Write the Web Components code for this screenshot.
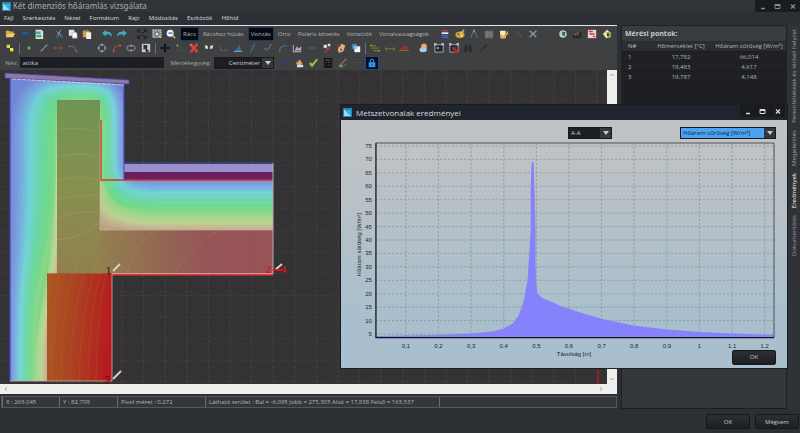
<!DOCTYPE html>
<html lang="hu">
<head>
<meta charset="utf-8" />
<title>Két dimenziós hőáramlás vizsgálata</title>
<style>
  html, body { height: 100%; }
  body {
    margin: 0;
    overflow: hidden;
    background: #2c2f34;
    color: #b4b6ba;
    font: 6px/8px "Open Sans", "Noto Sans", sans-serif;
  }
</style>
</head>
<body>
<heat-app></heat-app>

<script>
const define = (name, html, setup) => {
  const template = document.createElement("template");
  template.innerHTML = html;
  customElements.define(
    name,
    class extends HTMLElement {
      constructor() {
        super();
        this.attachShadow({ mode: "open" });
        this.shadowRoot.appendChild(template.content.cloneNode(true));
      }
      connectedCallback() {
        if (setup) setup(this, this.shadowRoot);
      }
    }
  );
};

// ---- icons, 12x12 canvas ----
const ICONS = {
  open: `<path d="M1 2h4l1 1h4v2H3l-2 5z" fill="#e8a33c"/><path d="M3 5h9l-2 5H1z" fill="#f8c869"/>`,
  save: `<path d="M1 3h10v6H1z" fill="#24466f"/><path d="M3 4h6v2H3z" fill="#315d90"/>`,
  export: `<path d="M2 1h7l2 2v9H2z" fill="#d5e6d8"/><path d="M2 3h6v3H2z" fill="#4c9fc8"/><path d="M3 7h6v3H3z" fill="#43b351"/>`,
  cut: `<path d="M8 1L5 8M3 3l6 5" stroke="#9aa9bb" fill="none"/><circle cx="4" cy="9" r="1.5" fill="none" stroke="#3f78b8"/><circle cx="9" cy="9" r="1.2" fill="none" stroke="#3f78b8"/>`,
  copy: `<path d="M1 1h6l1 2v5H1z" fill="#e4e6e8"/><path d="M5 4h5l1 2v5H5z" fill="#f8f8f8" stroke="#8a8f98" stroke-width=".5"/>`,
  paste: `<path d="M1 2h8v8H1z" fill="#d99c45"/><path d="M3 1h4v2H3z" fill="#777"/><path d="M5 4h6v8H5z" fill="#f0eee8"/>`,
  undo: `<path d="M0 5l5-4v2.500c4-1 7 1 7 6-2-3-4-3.500-7-3v2.500z" fill="#45a9c6"/>`,
  redo: `<path d="M12 5L7 1v2.500c-4-1-7 1-7 6 2-3 4-3.500 7-3v2.500z" fill="#45a9c6"/>`,
  extents: `<path d="M1 4V1h3M8 1h3v3M11 8v3H8M4 11H1V8M2 2l3 3M10 2L7 5M10 10L7 7M2 10l3-3" fill="none" stroke="#17181a" stroke-width="1.200"/>`,
  zoomwin: `<path d="M1 1h10v9H1z" fill="#8f979f"/><path d="M1 1h10v9H1z" fill="none" stroke="#d8d8d8" stroke-dasharray="2 1"/><circle cx="6" cy="6" r="2.500" fill="#d8e8f5" stroke="#394250"/><path d="M8 8l3 3" stroke="#ddd"/>`,
  zoom: `<circle cx="5" cy="5" r="4.200" fill="#f1f5fa"/><path d="M3 4h5v2H3z" fill="#4b8bd0"/><path d="M8 8l3 3" stroke="#d5a04b" stroke-width="2"/>`,
  layers: `<path d="M2 1h8v2H2z" fill="#a83c55"/><path d="M2 4h8v2H2z" fill="#e9ecf5"/><path d="M2 7h8v1H2z" fill="#4c79d8"/><path d="M2 9h8v2H2z" fill="#3862d0"/>`,
  palette: `<ellipse cx="6" cy="7" rx="5.500" ry="4" fill="#c9a13c"/><circle cx="4" cy="6" r="1" fill="#5e471d"/><circle cx="8" cy="8" r="1" fill="#fff"/><path d="M6 6l5-5" stroke="#e8d078" stroke-width="1.500"/>`,
  compass: `<path d="M6 1L2 11M6 1l4 10" stroke="#5d6e82" stroke-width="1.300"/><path d="M5 1h2v3H5z" fill="#8594a6"/>`,
  table: `<path d="M1 2h10v9H1z" fill="#676569"/><path d="M1 5h10M1 8h10M4 2v9M8 2v9" stroke="#8d7f84" stroke-width=".8"/>`,
  check: `<path d="M1 2h7v9H2z" fill="#f4e5ca"/><path d="M2 6l3 3 6-7v4L5 12 2 9z" fill="#f39b32"/>`,
  line: `<path d="M3 3l6 6" stroke="#5d626a" stroke-width="1.200"/>`,
  cross: `<path d="M2 2l8 8M10 2l-8 8" stroke="#8f979f" stroke-width="1.600"/>`,
  redline: `<path d="M2 6h8" stroke="#6d3337"/>`,
  globe: `<circle cx="6" cy="6" r="4.500" fill="#b9cfc4"/><path d="M5 3l4 1-1 5-3-2z" fill="#2e6b51"/>`,
  bars: `<path d="M1 7h3v4H1zM5 8h3v3H5zM9 2h2v9H9z" fill="#202124"/><path d="M2 7l4-1 4-4" stroke="#a66443" fill="none"/>`,
  report: `<path d="M1 1h10v10H1z" fill="#ead5d5"/><path d="M2 2h5v2H2zM3 5h6v2H3zM7 8h3v2H7z" fill="#d23b43"/>`,
  ball: `<path d="M1 6l5-5 5 4-1 5-5 1z" fill="#e9e8b5"/><path d="M5 4h4l2 3-4 4z" fill="#7d9b2e"/><path d="M6 6h2v2H6z" fill="#26301d"/>`,
  snap: `<path d="M2 2h4v4H2z" fill="#e1d540"/><path d="M6 6h4v4H6z" fill="#f5e63c"/>`,
  dot: `<circle cx="6" cy="6" r="2" fill="#45b54d"/>`,
  seg: `<path d="M2 10l8-8" stroke="#9c9296" stroke-width="1.400"/>`,
  hseg: `<path d="M1 6h10" stroke="#b23b3e"/><path d="M1 5h2v2H1zM9 5h2v2H9z" fill="#c94c48"/>`,
  poly: `<path d="M1 4h6l3 6" stroke="#836b91" fill="none"/><path d="M1 3h2v2H1zM9 9h2v2H9z" fill="#ad5661"/>`,
  rect: `<path d="M2 2h8v8H2z" fill="none" stroke="#3f4678" stroke-width="1.500" stroke-dasharray="2 1"/>`,
  circle: `<circle cx="6" cy="6" r="4" fill="none" stroke="#6c6f92" stroke-width="1.500"/><path d="M5 1h2v2H5zM5 9h2v2H5zM1 5h2v2H1zM9 5h2v2H9z" fill="#b6b7ca"/>`,
  arc: `<path d="M2 10c0-6 3-7 8-7" fill="none" stroke="#a64a43" stroke-width="1.500"/><path d="M1 9h2v2H1zM9 2h2v2H9z" fill="#ca6150"/>`,
  ellipse: `<ellipse cx="6" cy="6" rx="5" ry="3" fill="none" stroke="#7d76a0" stroke-width="1.500"/><path d="M5 2h2v2H5zM5 8h2v2H5z" fill="#a9a4c8"/>`,
  image: `<path d="M1 1h10v10H1z" fill="#c9cac7"/><path d="M3 2l5 1-1 4 3 3-4 1-1-4-2 1z" fill="#2a2d2e"/>`,
  move: `<path d="M6 0l2 3H7v2h2V4l3 2-3 2V7H7v2h1l-2 3-2-3h1V7H3v1L0 6l3-2v1h2V3H4z" fill="#111214"/>`,
  scatter: `<path d="M2 2h2v2H2z" fill="#b8a87f"/><path d="M6 5l4 5" stroke="#565e68"/><path d="M3 8h1v1H3z" fill="#999"/>`,
  delete: `<path d="M2 2l8 9M10 1l-8 10" stroke="#d94136" stroke-width="3"/><path d="M1 1h3v2H1z" fill="#d97a62"/>`,
  mirror: `<path d="M1 3h3l1 4H2zM11 3H8L7 7h3z" fill="#e7e7e3"/>`,
  offset: `<path d="M2 3v6h8" fill="none" stroke="#6b6d74" stroke-dasharray="2 1"/><path d="M6 5l3 3" stroke="#9c5757"/>`,
  rotate: `<path d="M2 10L8 2l2 8z" fill="#2b6f9d"/><path d="M1 10h10" stroke="#92b7cc"/>`,
  trim: `<path d="M8 1L5 7l-2 4" fill="none" stroke="#3e6b95" stroke-width="1.500"/>`,
  extend: `<path d="M10 1L6 8M2 6l3 3" fill="none" stroke="#4d7ba6" stroke-width="1.300"/>`,
  fillet: `<path d="M2 11c0-6 2-8 9-8" fill="none" stroke="#3f7397" stroke-width="1.500"/>`,
  chart: `<path d="M1 2h1v8h9v1H1z" fill="#c5c4cf"/><path d="M3 9l3-5 2 3 3-3v5z" fill="#b7a8c9"/>`,
  join: `<path d="M0 6h4M8 6h4M4 4l4 4M8 4L4 8" stroke="#49657e"/>`,
  explode: `<path d="M2 2h4v4H2zM7 1h3v3H7z" fill="#dedcdc"/><path d="M5 5h4v3H5zM3 9h3v2H3z" fill="#b93b4b"/>`,
  hand: `<path d="M3 5l4-4 4 2-2 7-5 2-2-3z" fill="#e1ac83"/><path d="M1 2h4v3H1z" fill="#6c4141"/><path d="M5 6l3 2-3 2z" fill="#b74332"/>`,
  group: `<path d="M1 1h6v6H1z" fill="#3d84ad"/><path d="M4 4h7v7H4z" fill="#f0f4f6"/><path d="M3 3h4v4H3z" fill="#89c0da"/>`,
  dim: `<path d="M1 3h6M2 6h8M4 9h8" stroke="#7f7c25" stroke-width="1.500"/><path d="M1 1v4M11 8v3" stroke="#a5a02c"/>`,
  dimline: `<path d="M0 7h12M1 5v4M11 5v4" stroke="#827e27" stroke-width="1.200"/>`,
  hatch: `<path d="M1 8l5-5 5 2v3z" fill="#a52a2d"/><path d="M0 9h12" stroke="#807b26"/>`,
  weather: `<circle cx="6" cy="4" r="3.500" fill="#eda45c"/><ellipse cx="5" cy="8" rx="4.500" ry="3" fill="#a9c9e6"/>`,
  frame: `<path d="M1 2h10v9H1z" fill="#24272b" stroke="#b2bac3"/><path d="M0 0h3v3H0zM9 0h3v3H9z" fill="#b2bac3"/><path d="M3 5h3v2H3z" fill="#8ea5bb"/>`,
  framered: `<path d="M1 2h10v9H1z" fill="#30272b" stroke="#a5adb8"/><path d="M0 0h3v3H0zM9 0h3v3H9z" fill="#b2bac3"/><path d="M4 5h4v3h3v4H6V8H4z" fill="#bf2632"/>`,
  binoc: `<path d="M2 2h3v9H1zM7 2h3l1 9H7zM4 5h4v2H4z" fill="#2b2c2e"/>`,
  pencil: `<path d="M2 11l1-3 7-7 1 2-7 7z" fill="#2d2e30"/>`,
  blue: `<path d="M4 5h4v2H4zM5 4h2v4H5z" fill="#29349a"/>`,
  edit: `<path d="M2 2l6 1 2 4-6 4z" fill="#e4a74c"/><path d="M5 8h6v3H3z" fill="#dfe0e9"/><path d="M1 2h4v3H1z" fill="#393f76"/>`,
  ok: `<path d="M1 7l2-2 2 2 5-6 2 1-7 9z" fill="#8cc63f"/>`,
  calc: `<path d="M1 0h10v12H1z" fill="#151618"/><path d="M3 2h6v1H3zM3 5h1v1H3zM6 5h1v1H6zM8 5h1v1H8zM3 8h1v1H3zM6 8h1v1H6zM8 8h1v1H8z" fill="#77797c"/>`,
  measure: `<path d="M1 10L10 1" stroke="#a16f69" stroke-width="1.500"/><path d="M3 8h3v3H1z" fill="#43a75b"/><path d="M8 7h2v2H8z" fill="#b74c4c"/>`,
  dots: `<path d="M1 5h3v1H1zM8 5h3v1H8z" fill="#47607a"/>`,
  lock: `<path d="M4 5V3.500a2 2 0 0 1 4 0V5" fill="none" stroke="#3491f2" stroke-width="1.300"/><path d="M2 5h8v6H2z" fill="#3491f2"/><path d="M6 7v2" stroke="#0b2e55"/>`,
};

// <tool-group icons="a b c"> spreads its buttons over the basis that its user gives
define("tool-group", `
<style>
  :host { display: flex; justify-content: space-between; align-items: center; }
  button { width: 14px; height: 14px; padding: 2px; border: 0; background: none; }
  button.on { background: #04101f; outline: 1px solid #1e4a7c; outline-offset: -1px; }
  svg { display: block; width: 10px; height: 10px; }
</style>`, (host, root) => {
  for (const name of host.getAttribute("icons").split(" ")) {
    const button = document.createElement("button");
    button.type = "button";
    button.setAttribute("aria-label", name);
    if (name === "lock") button.className = "on";
    button.innerHTML = `<svg viewBox="0 0 12 12">${ICONS[name]}</svg>`;
    root.append(button);
  }
});

define("app-logo", `
<style>
  :host { display: block; width: 9px; height: 9px; }
  svg { display: block; }
</style>
<svg viewBox="0 0 9 9"><path d="M0 0h9v9H0z" fill="#2287b8"/><path d="M1 1l7 7H1z" fill="#8fdcf5"/><path d="M2 2h6v5z" fill="#39aedd"/></svg>`);

define("window-buttons", `
<style>
  :host { display: flex; background: #191b1f; border-radius: 0 0 2px 2px; }
  button { width: 15px; height: 12px; padding: 0; border: 0; background: none; color: inherit; }
  svg { display: block; width: 7px; height: 7px; margin: auto; fill: none; stroke: currentColor; }
</style>
<button aria-label="Kis méret"><svg viewBox="0 0 7 7"><path d="M2 5.500h4" stroke-width="1.500"/></svg></button>
<button aria-label="Teljes méret"><svg viewBox="0 0 7 7"><path d="M1 1.500h5v4H1zM1 2.500h5"/></svg></button>
<button aria-label="Bezárás"><svg viewBox="0 0 7 7"><path d="M2 1.500l4 4M6 1.500l-4 4" stroke-width="1.300"/></svg></button>`);

define("menu-bar", `
<style>
  :host { display: block; font-family: "Noto Sans", sans-serif; }
  nav { display: flex; gap: 9px; padding: 2px 4px 3px; }
  a { color: #d0d2d5; text-decoration: none; }
</style>
<nav>
  <a href="#">Fájl</a><a href="#">Szerkesztés</a><a href="#">Nézet</a><a href="#">Formátum</a>
  <a href="#">Rajz</a><a href="#">Módosítás</a><a href="#">Eszközök</a><a href="#">Hőhíd</a>
</nav>`);

define("push-button", `
<style>
  :host { display: block; }
  button {
    width: 44px; height: 15px; padding: 0;
    font: inherit; color: #c6c8cb;
    background: linear-gradient(#2d3033, #1c1e20);
    border: 1px solid #15171a; border-radius: 2px;
  }
</style>
<button type="button"><slot></slot></button>`);

define("drop-down", `
<style>
  :host { display: flex; height: 12px; box-sizing: border-box; border: 1px solid #17191d; background: #1c1e23; color: #d0d2d5; }
  select {
    flex: 1; min-width: 0; padding: 0 2px; border: 0; border-radius: 0;
    appearance: none; background: none; color: inherit; font: inherit;
    text-align-last: var(--align, left);
  }
  span { width: 11px; background: #34373e; display: grid; place-items: center; }
  svg { width: 6px; height: 4px; }
  :host([active]) { color: #0c2440; }
  :host([active]) select { background: #4da3f2; }
</style>
<select></select>
<span><svg viewBox="0 0 6 4"><path d="M0 0h6L3 4z" fill="#c9cbce"/></svg></span>`, (host, root) => {
  const select = root.querySelector("select");
  select.setAttribute("aria-label", host.getAttribute("label"));
  select.add(new Option(host.getAttribute("value")));
});

define("tool-bars", `
<style>
  :host { display: flex; flex-direction: column; background: #3e4042; border-top: 1px solid #e4e5e6; }
  .row { display: flex; align-items: center; height: 14px; gap: 2px; padding-left: 3px; }
  .row.first { gap: 6px; height: 15px; }
  .sep { width: 1px; height: 11px; background: #6a6c6f; }
  .toggles { display: flex; flex: 1; justify-content: space-between; }
  .toggles button { height: 14px; padding: 0 2px; border: 1px solid transparent; background: none; color: #b4b6ba; font: inherit; white-space: nowrap; }
  .toggles button[aria-pressed="true"] { background: #060a12; border-color: #1d3a5c; }
  label { color: #a4a6a9; }
  .row.fields { gap: 3px; height: 15px; padding-left: 5px; }
  .unit { margin-left: 3px; }
  input { width: 144px; height: 11px; box-sizing: border-box; border: 0; padding: 0 2px; background: #1c1e23; color: #c6c8cb; font: inherit; }
  drop-down { width: 60px; --align: right; }
</style>
<div class="row first">
  <tool-group icons="open save export" style="flex:0 0 43px"></tool-group>
  <tool-group icons="cut copy paste" style="flex:0 0 42px"></tool-group>
  <tool-group icons="undo redo" style="flex:0 0 29px"></tool-group>
  <tool-group icons="extents zoomwin zoom" style="flex:0 0 43px;margin-right:-4px"></tool-group>
  <div class="toggles">
    <button aria-pressed="true">Rács</button><button>Rácshoz húzás</button><button aria-pressed="true">Vonzás</button>
    <button>Orto</button><button>Poláris követés</button><button>Vonalzók</button><button>Vonalvastagságok</button>
  </div>
  <tool-group icons="layers palette compass table check line cross redline globe bars report ball" style="flex:0 0 176px;margin-right:3px"></tool-group>
</div>
<div class="row">
  <tool-group icons="snap"></tool-group><i class="sep"></i>
  <tool-group icons="dot seg hseg poly rect circle arc ellipse image" style="flex:0 0 131px"></tool-group><i class="sep"></i>
  <tool-group icons="move scatter delete mirror offset rotate trim extend fillet chart join explode hand group" style="flex:0 0 205px"></tool-group><i class="sep"></i>
  <tool-group icons="dim dimline hatch" style="flex:0 0 43px;margin-right:4px"></tool-group>
  <tool-group icons="weather frame framered binoc pencil" style="flex:0 0 73px"></tool-group>
</div>
<div class="row fields">
  <label for="name">Név:</label><input id="name" value="attika" />
  <label class="unit">Mértékegység:</label><drop-down label="Mértékegység" value="Centiméter"></drop-down>
  <tool-group icons="blue edit ok calc measure dots lock" style="flex:1;max-width:102px"></tool-group>
</div>`);

// ---- section drawing with isotherms ----
const HEAT = [
  [0, 112, 135, 215], [0.1, 110, 160, 220], [0.25, 105, 208, 215], [0.4, 98, 212, 160],
  [0.55, 105, 214, 130], [0.7, 150, 212, 130], [0.85, 188, 205, 140], [1, 190, 160, 135],
];

function heatColor(t) {
  const i = Math.max(1, HEAT.findIndex((s) => s[0] >= t));
  const [a, b] = [HEAT[i - 1], HEAT[i]];
  const k = (t - a[0]) / (b[0] - a[0]);
  return `rgb(${[1, 2, 3].map((n) => Math.round(a[n] + (b[n] - a[n]) * k))})`;
}

function isotherm(t) {
  const xb = 10 + 37 * t;
  const yr = 180 + 50 * t;
  const end = `${yr} L275 ${yr} L275 400 Z`;
  const start = `M${xb} 400 L${xb} 370`;
  if (t <= 0.65) {
    const u = t / 0.65;
    const xl = 12 + 45 * u;
    const ty = 77 + 23 * u;
    const xr = 124 - 23 * u;
    return `${start} C${xb} 250 ${xl} 270 ${xl} 150 C${xl} ${ty + 6} ${xl + 8} ${ty} 80 ${ty}
      C${xr - 6} ${ty} ${xr} ${ty + 6} ${xr} 125 L${xr} 158 C${xr} ${yr - 6} ${xr + 14} ${yr} 155 ${end}`;
  }
  const v = (t - 0.65) / 0.35;
  return `${start} C${xb} 300 57 300 57 ${100 + 170 * v} L100 ${165 + 58 * v} C106 ${yr - 5} 125 ${yr} 165 ${end}`;
}

define("section-canvas", `
<style>
  :host { display: block; overflow: hidden; background: #333335; }
  svg { display: block; width: 100%; height: 100%; }
  text { font: 10px "Liberation Serif", serif; }
  .hot { font-weight: bold; fill: #d8141a; }
</style>
<svg viewBox="0 70 607 315" preserveAspectRatio="xMinYMin slice">
  <defs>
    <clipPath id="body"><path d="M10 77L124 84V180H273V274H112V381H10Z"/></clipPath>
    <linearGradient id="column" x1="0" y1="0" x2="0" y2="1">
      <stop offset="0" stop-color="#6f9452"/><stop offset=".5" stop-color="#87904f"/><stop offset="1" stop-color="#92804f"/>
    </linearGradient>
    <linearGradient id="slab" x1="0" y1="0" x2="1" y2="0">
      <stop offset="0" stop-color="#92804f"/><stop offset=".3" stop-color="#936b52"/><stop offset=".6" stop-color="#955557"/><stop offset="1" stop-color="#975356"/>
    </linearGradient>
    <linearGradient id="wall" x1="0" y1="0" x2="1" y2=".1">
      <stop offset="0" stop-color="#ab5a22"/><stop offset=".5" stop-color="#ab4022"/><stop offset="1" stop-color="#b51c1f"/>
    </linearGradient>
  </defs>
  <g id="grid" fill="none" stroke="#6b4247" stroke-width=".6" stroke-dasharray="3 2"></g>
  <path d="M598 370v15" stroke="#a01c20" stroke-width="2"/>
  <g clip-path="url(#body)">
    <path d="M0 70h280v320H0z" fill="#7087d7"/>
    <g id="heat" stroke="#fff" stroke-opacity=".18" stroke-width=".6"></g>
    <path d="M57 100h43v174H57z" fill="url(#column)"/>
    <path d="M100 230h173v44H100z" fill="url(#slab)"/>
    <g fill="none" stroke="#b5a15c" stroke-opacity=".6" stroke-width=".7">
      <path d="M57 130q22-5 43 3M57 157q22-6 43 0M57 180q22-5 43 0M57 199q22-4 43-4M57 218q20-8 43-6M57 240q25-2 43-18"/>
      <path d="M74 274q4-25 33-44M93 274q3-25 36-44M127 274q6-30 30-44M174 274q20-32 46-44" stroke-opacity=".35"/>
    </g>
    <path d="M47 274h65v107H47z" fill="url(#wall)"/>
    <path d="M52 381q0-70 8-107M61 381q0-65 11-107M70 381q0-60 14-107M79 381q1-60 14-107M88 381q1-65 12-107M96 381q1-70 10-107" fill="none" stroke="#c8702c" stroke-opacity=".35" stroke-width=".7"/>
    <path d="M100 122v108h173" fill="none" stroke="#d3b89c" stroke-opacity=".6"/>
  </g>
  <path d="M124 164h149v8H124z" fill="#9a90cb"/>
  <path d="M124 172h149v7H124z" fill="#6a2060"/>
  <path d="M124 180V163H273" fill="none" stroke="#4b45c0"/>
  <path d="M124 84v79M10 78v303" stroke="#4843bd" stroke-width="1.200"/>
  <path d="M5 73l124 7v4L5 78z" fill="#8d78a8" stroke="#4a42b4" stroke-width=".7"/>
  <path d="M12 79l112 6" stroke="#ded3d8" stroke-width=".8" stroke-dasharray="4 1"/>
  <path d="M101 120v60h172" fill="none" stroke="#d23432" stroke-width="1.300"/>
  <path d="M273 163v111" stroke="#b6a9ae"/>
  <path d="M47 273.500h65" stroke="#a83c2a" stroke-width=".6"/>
  <path d="M112 274.500h161" stroke="#e7363b" stroke-width="2"/>
  <path d="M112 273.500h161M112 274v107H10" fill="none" stroke="#e0aaa4" stroke-width=".8"/>
  <g stroke="#ddd3c6" stroke-width="1.800">
    <path d="M113 271l7-7M275 270l7-6M113 379l8-8"/>
  </g>
  <text x="106" y="274" fill="#1a1010">1</text>
  <text class="hot" x="266" y="273">2</text>
  <path d="M273 270h9" stroke="#d8141a" stroke-width="2"/>
  <text class="hot" x="281" y="273">4</text>
  <text class="hot" x="105" y="383" stroke="#5e0a0c" stroke-width=".4">3</text>
</svg>`, (host, root) => {
  const svg = (tag, d) => {
    const el = document.createElementNS("http://www.w3.org/2000/svg", tag);
    el.setAttribute("d", d);
    return el;
  };
  const grid = root.querySelector("#grid");
  for (let x = 14; x < 607; x += 21.6) grid.append(svg("path", `M${x} 70v320`));
  for (let y = 78.5; y < 390; y += 21.7) {
    const row = svg("path", `M0 ${y}h607`);
    row.setAttribute("stroke-opacity", ".6");
    grid.append(row);
  }
  const heat = root.querySelector("#heat");
  for (let i = 0; i <= 40; i++) {
    const path = svg("path", isotherm(i / 40));
    path.setAttribute("fill", heatColor(i / 40));
    heat.append(path);
  }
});

define("scroll-pane", `
<style>
  :host { display: grid; grid-template: minmax(0, 1fr) 10px / minmax(0, 1fr) 10px; min-height: 0; }
  .v, .h { background: #efefee; display: flex; justify-content: space-between; align-items: center; }
  .v { flex-direction: column; padding: 3px 0; }
  .h { grid-column: 1 / 3; padding: 0 14px 0 4px; }
  svg { width: 4px; height: 4px; fill: none; stroke: #a8a8a8; }
</style>
<slot></slot>
<div class="v"><svg viewBox="0 0 4 4"><path d="M0 3l2-2 2 2"/></svg><svg viewBox="0 0 4 4"><path d="M0 1l2 2 2-2"/></svg></div>
<div class="h"><svg viewBox="0 0 4 4"><path d="M3 0L1 2l2 2"/></svg><svg viewBox="0 0 4 4"><path d="M1 0l2 2-2 2"/></svg></div>`);

define("status-bar", `
<style>
  :host { display: flex; margin: 2px 0 1px 1px; border: 1px solid #55565f; background: #34363a; white-space: pre; }
  span { padding: 1px 3px; border-left: 1px solid #6b6b74; box-sizing: border-box; }
  span:first-child { border: 0; }
  span:last-child { flex: 0 0 235px; border-right: 1px solid #6b6b74; }
</style>
<span style="flex:0 0 57px">X : 269,045</span><span style="flex:0 0 58px">Y : 82,709</span><span style="flex:0 0 88px">Pixel méret : 0,272</span><span>Látható terület : Bal = -6,095 Jobb = 275,305 Alsó = 17,938 Felső = 163,537</span>`);

define("measure-panel", `
<style>
  :host { display: block; box-sizing: border-box; border: 1px solid #202226; border-bottom-color: #1b1d20; background: #33363a; }
  h2 { margin: 0; padding: 4px 3px 3px; font: bold 7px/8px "Open Sans", sans-serif; color: #c6c8cb; background: #383b40; }
  .list { background: #1d1f23; height: 78px; }
  table { width: 100%; border-collapse: collapse; table-layout: fixed; }
  th { height: 10px; padding: 0; font-weight: normal; background: #2b2d31; }
  td { height: 9px; padding: 0; text-align: center; border-top: 1px solid #1b1c20; background: #1f2125; }
  tr > :first-child { width: 28px; text-align: left; padding-left: 6px; box-sizing: border-box; }
  tr > :nth-child(2) { width: 62px; }
</style>
<h2>Mérési pontok:</h2>
<div class="list"><table>
  <tr><th>N#</th><th>Hőmérséklet [°C]</th><th>Hőáram sűrűség [W/m²]</th></tr>
  <tr><td>1</td><td>17,782</td><td>66,014</td></tr>
  <tr><td>2</td><td>19,483</td><td>4,617</td></tr>
  <tr><td>3</td><td>19,787</td><td>4,148</td></tr>
</table></div>`);

define("side-tabs", `
<style>
  :host { display: flex; flex-direction: column; gap: 7px; padding-top: 4px; background: #2f3237; font-family: "Noto Sans", sans-serif; }
  button {
    writing-mode: vertical-rl; transform: rotate(180deg); width: 12px; padding: 0;
    border: 0; background: none; color: #96989d; font: inherit; white-space: nowrap;
  }
  button[aria-selected="true"] { color: #f0f0f0; }
</style>
<button role="tab">Peremfeltételek és térbeli helyzet</button>
<button role="tab">Megjelenítés</button>
<button role="tab" aria-selected="true">Eredmények</button>
<button role="tab">Dokumentálás</button>`);

// ---- heat flow chart ----
const FLOW = `35 197.500 95 196.500 130 195 152 193 163 190 172 185 178 177 183 163 187 141 189 111 190 91
  190 53 191 23 193 23 194 53 195 96 195 124 195.500 144 197 155 202 159.500 215 165 220 167.500 235 172.500
  260 180 293 187 327 191 360 193.500 393 195 434 196.500 434 199 35 199`;

define("flow-chart", `
<style>
  :host { display: block; }
  svg { display: block; width: 100%; }
  text { font: 6px "Liberation Sans", sans-serif; fill: #22262b; }
</style>
<svg viewBox="0 0 447 211">
  <g id="lines" stroke="#7e8a92" stroke-width=".7" stroke-dasharray="2 2"></g>
  <polygon points="${FLOW}" fill="#8682fc"/>
  <path d="M35 4H434V199" fill="none" stroke="#4c5257"/>
  <path d="M35 4V199H434" fill="none" stroke="#15171a" stroke-width="1.300"/>
  <g id="labels"></g>
  <text transform="translate(20 106) rotate(-90)" text-anchor="middle">Hőáram sűrűség [W/m²]</text>
</svg>`, (host, root) => {
  let lines = "";
  let labels = "";
  for (let v = 5; v <= 75; v += 5) {
    const y = 195.5 - (v - 5) * 2.693;
    lines += `<path d="M35 ${y}H434"/>`;
    labels += `<text x="31" y="${y + 2}" text-anchor="end">${v}</text>`;
  }
  for (let i = 1; i <= 12; i++) {
    const x = 65 + (i - 1) * 32.7;
    lines += `<path d="M${x} 4V199"/>`;
    labels += `<text x="${x}" y="209" text-anchor="middle">${String(i / 10).replace(".", ",")}</text>`;
  }
  root.querySelector("#lines").innerHTML = lines;
  root.querySelector("#labels").innerHTML = labels;
});

define("result-dialog", `
<style>
  :host { display: flex; flex-direction: column; border: 1px solid #1b1d22; box-sizing: border-box; background: linear-gradient(#c2c4c6, #b9c1c6 35%, #a9bfcd 80%); }
  header { display: flex; align-items: center; gap: 4px; height: 15px; padding-left: 2px; background: #20242c; color: #d8dade; font-size: 8px; }
  header span { flex: 1; }
  window-buttons { align-self: flex-start; margin-right: 2px; }
  .pickers { display: flex; justify-content: flex-end; gap: 68px; padding: 7px 11px 0; }
  .pickers drop-down:first-child { width: 44px; }
  .pickers drop-down:last-child { width: 96px; }
  footer { display: grid; grid-template-columns: 1fr auto; align-items: start; padding: 0 11px 3px 35px; }
  footer span { padding-left: 40px; text-align: center; color: #22262b; font-family: "Liberation Sans", sans-serif; }
</style>
<header><app-logo></app-logo><span>Metszetvonalak eredményei</span><window-buttons></window-buttons></header>
<div class="pickers">
  <drop-down label="Metszet" value="A-A"></drop-down>
  <drop-down label="Mennyiség" value="Hőáram sűrűség [W/m²]" active></drop-down>
</div>
<flow-chart></flow-chart>
<footer><span>Távolság [m]</span><push-button>OK</push-button></footer>`);

define("heat-app", `
<style>
  :host { display: flex; flex-direction: column; height: 100vh; position: relative; background: #2c2f34; }
  header { display: flex; align-items: center; height: 12px; padding-left: 2px; gap: 2px; font-family: "Noto Sans", sans-serif; font-size: 8px; color: #a9abaf; background: #303338; }
  header span { flex: 1; }
  header window-buttons { color: #85878b; }
  main { flex: 1; display: flex; min-height: 0; }
  .work { flex: 1; display: flex; flex-direction: column; min-width: 0; }
  scroll-pane { flex: 1; }
  measure-panel { width: 166px; margin-left: 4px; }
  side-tabs { width: 12px; margin-left: 1px; }
  footer { display: flex; justify-content: flex-end; gap: 5px; padding: 5px 1px 4px; }
  result-dialog { position: absolute; left: 340px; right: 12px; top: 104px; }
</style>
<header><app-logo></app-logo><span>Két dimenziós hőáramlás vizsgálata</span><window-buttons></window-buttons></header>
<menu-bar></menu-bar>
<main>
  <div class="work">
    <tool-bars></tool-bars>
    <scroll-pane><section-canvas></section-canvas></scroll-pane>
    <status-bar></status-bar>
  </div>
  <measure-panel></measure-panel>
  <side-tabs></side-tabs>
</main>
<footer><push-button>OK</push-button><push-button>Mégsem</push-button></footer>
<result-dialog></result-dialog>`);
</script>
</body>
</html>
